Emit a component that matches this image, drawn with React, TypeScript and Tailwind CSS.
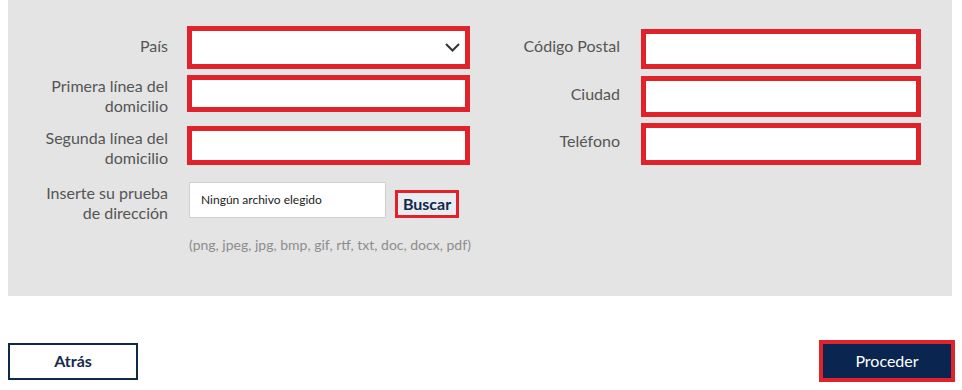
export default function App() {
  return (
    <div className="w-[962px] h-[390px] bg-white font-['Lato',sans-serif] text-[16px]">
      <section className="ml-[8px] mr-[10px] h-[296px] bg-[#e4e4e4] flex">
        {/* left column */}
        <div className="w-[462px] flex flex-col">
          <div className="mt-[26px] flex items-center">
            <label className="w-[160px] mb-[4px] text-right text-[#555] leading-5">País</label>
            <div className="ml-[19px] w-[283px] h-[43px] border-[5px] border-[#e0222b] bg-white flex items-center justify-end pr-[5px]">
              <svg width="15" height="9" viewBox="0 0 15 9" fill="none">
                <path d="M1 1l6.5 6.5L14 1" stroke="#333" strokeWidth="2" />
              </svg>
            </div>
          </div>
          <div className="mt-[6px] flex items-start">
            <label className="w-[160px] mt-[1px] text-right text-[#555] leading-5">
              Primera línea del
              <br />
              domicilio
            </label>
            <div className="ml-[19px] w-[283px] h-[37px] border-[5px] border-[#e0222b] bg-white" />
          </div>
          <div className="mt-[10px] flex items-start">
            <label className="w-[160px] mt-[2px] text-right text-[#555] leading-5">
              Segunda línea del
              <br />
              domicilio
            </label>
            <div className="ml-[19px] w-[283px] h-[39px] border-[5px] border-[#e0222b] bg-white" />
          </div>
          <div className="mt-[14px] flex items-start">
            <label className="w-[160px] mt-[1px] text-right text-[#555] leading-5">
              Inserte su prueba
              <br />
              de dirección
            </label>
            <div className="ml-[21px] w-[197px] h-[36px] border border-[#cfcfcf] bg-white flex items-center pl-[11px] text-[12px] text-[#222]">
              Ningún archivo elegido
            </div>
            <button className="ml-[9px] mt-[8px] w-[64px] h-[28px] border-[3px] border-[#e0222b] bg-[#e9edf1] text-[16px] font-bold text-[#10284a] leading-none">
              Buscar
            </button>
          </div>
          <p className="ml-[181px] mt-[13px] whitespace-nowrap text-[14px] text-[#8d8d8d] leading-[18px]">
            (png, jpeg, jpg, bmp, gif, rtf, txt, doc, docx, pdf)
          </p>
        </div>
        {/* right column */}
        <div className="flex flex-col">
          <div className="mt-[29px] flex items-center">
            <label className="w-[150px] mb-[7px] text-right text-[#555] leading-5">Código Postal</label>
            <div className="ml-[21px] w-[280px] h-[40px] border-[5px] border-[#e0222b] bg-white" />
          </div>
          <div className="mt-[7px] flex items-center">
            <label className="w-[150px] mb-[5px] text-right text-[#555] leading-5">Ciudad</label>
            <div className="ml-[21px] w-[280px] h-[41px] border-[5px] border-[#e0222b] bg-white" />
          </div>
          <div className="mt-[6px] flex items-center">
            <label className="w-[150px] mb-[6px] text-right text-[#555] leading-5">Teléfono</label>
            <div className="ml-[21px] w-[280px] h-[42px] border-[5px] border-[#e0222b] bg-white" />
          </div>
        </div>
      </section>
      <div className="mt-[44px] ml-[8px] mr-[7px] flex items-center justify-between">
        <button className="w-[130px] h-[37px] border-2 border-[#0d2a4a] bg-white font-bold text-[#152b4d]">
          Atrás
        </button>
        <button className="w-[136px] h-[42px] border-[4px] border-[#e0222b] bg-[#0a2550] text-white">
          Proceder
        </button>
      </div>
    </div>
  );
}
